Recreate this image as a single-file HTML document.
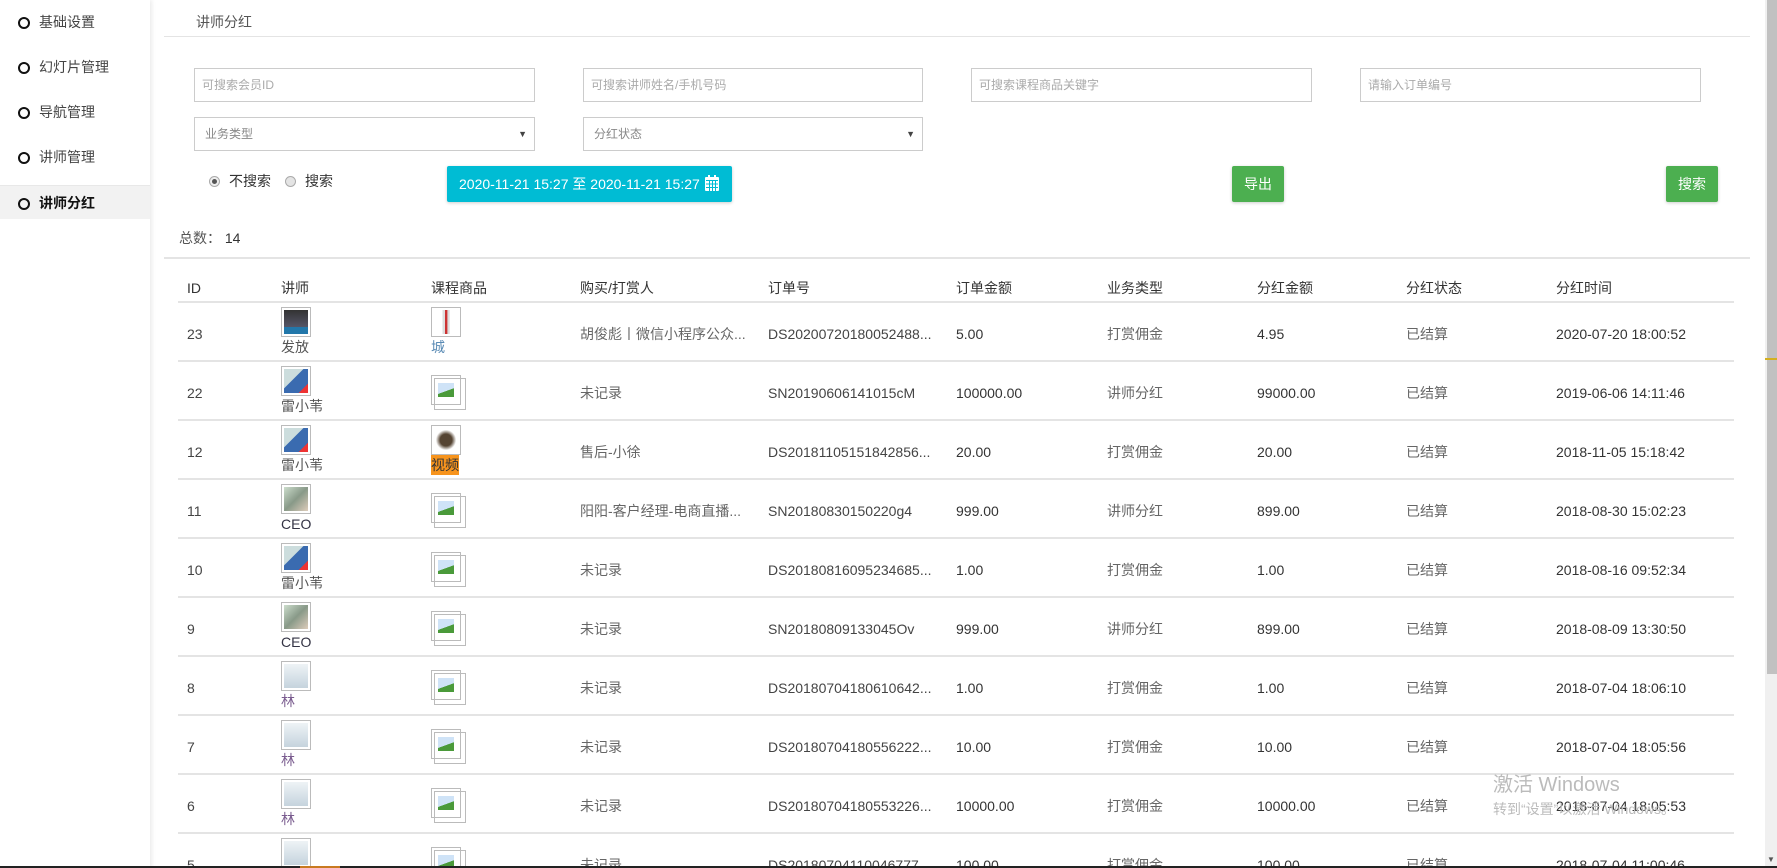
<!DOCTYPE html>
<html><head><meta charset="utf-8"><style>
*{margin:0;padding:0;box-sizing:border-box}
html{width:1777px;height:868px;overflow:hidden}
body{width:1777px;height:868px;overflow:hidden;background:#fff;font-family:"Liberation Sans","Noto Sans CJK SC",sans-serif;font-size:14px;color:#555;position:relative}
.abs{position:absolute}
.side{left:0;top:0;width:150px;height:868px;background:#fff;box-shadow:2px 0 4px rgba(0,0,0,.08)}
.nav{position:absolute;left:0;width:150px;height:34px;line-height:34px;padding-left:39px;color:#444;font-size:14px}
.nav:before{content:"";position:absolute;left:18px;top:12px;width:8px;height:8px;border:2px solid #111;border-radius:50%}
.nav.act{background:#f2f2f2;font-weight:bold;color:#111;border-top:1px solid #e8e8e8}
.inp{position:absolute;height:34px;border:1px solid #ccc;color:#aaa;font-size:12px;line-height:32px;padding-left:7px}
.sel{padding-left:10px;color:#888}
.sel:after{content:"▼";position:absolute;right:7px;top:0;font-size:9px;color:#444}
.btn{position:absolute;color:#fff;border-radius:2px;box-shadow:0 1px 3px rgba(0,0,0,.2);text-align:center;font-size:14px}
.line{position:absolute;height:2px;background:#e4e4e4}
.c{position:absolute;white-space:nowrap;line-height:20px;height:20px}
.av{position:absolute;width:30px;height:30px;border:1px solid #bbb;padding:2px}
.av i{display:block;width:100%;height:100%}
.pb{position:absolute;width:30px;height:30px;border:1px solid #bbb}
.pb:after{content:"";position:absolute;left:2px;top:2px;width:30px;height:30px;border:1px solid #bbb}
.pb i{position:absolute;left:6px;top:7px;width:16px;height:14px;background:linear-gradient(160deg,#cfe3f7 0 55%,#4a9a3a 56%)}
</style></head><body>
<div class="abs side">
<div class="nav" style="top:5px">基础设置</div>
<div class="nav" style="top:50px">幻灯片管理</div>
<div class="nav" style="top:95px">导航管理</div>
<div class="nav" style="top:140px">讲师管理</div>
<div class="nav act" style="top:185px">讲师分红</div>
</div>
<div class="c" style="left:196px;top:12px;color:#555">讲师分红</div>
<div class="line" style="left:164px;top:36px;width:1586px;height:1px"></div>
<div class="inp" style="left:194px;top:68px;width:341px">可搜索会员ID</div>
<div class="inp" style="left:583px;top:68px;width:340px">可搜索讲师姓名/手机号码</div>
<div class="inp" style="left:971px;top:68px;width:341px">可搜索课程商品关键字</div>
<div class="inp" style="left:1360px;top:68px;width:341px">请输入订单编号</div>
<div class="inp sel" style="left:194px;top:117px;width:341px">业务类型</div>
<div class="inp sel" style="left:583px;top:117px;width:340px">分红状态</div>
<div class="abs" style="left:209px;top:176px;width:11px;height:11px;border-radius:50%;border:1px solid #aaa;background:#eee"><div style="margin:2px;width:5px;height:5px;border-radius:50%;background:#555"></div></div>
<div class="c" style="left:229px;top:171px;color:#333">不搜索</div>
<div class="abs" style="left:285px;top:176px;width:11px;height:11px;border-radius:50%;border:1px solid #aaa;background:#e4e4e4"></div>
<div class="c" style="left:305px;top:171px;color:#333">搜索</div>
<div class="btn" style="left:447px;top:166px;width:285px;height:36px;background:#00bcd4;line-height:36px;text-align:left;padding-left:12px">2020-11-21 15:27 至 2020-11-21 15:27 <svg width="16" height="18" viewBox="0 0 16 18" style="vertical-align:-3px"><rect x="1" y="3" width="14" height="14" rx="1" fill="#fff"/><rect x="4" y="1" width="2" height="4" fill="#fff"/><rect x="10" y="1" width="2" height="4" fill="#fff"/><g fill="#00bcd4"><rect x="2" y="6" width="12" height="1"/><rect x="2" y="9.5" width="12" height="1"/><rect x="2" y="13" width="12" height="1"/><rect x="5" y="7" width="1" height="10"/><rect x="8" y="7" width="1" height="10"/><rect x="11" y="7" width="1" height="10"/></g></svg></div>
<div class="btn" style="left:1232px;top:166px;width:52px;height:36px;background:#4caf50;line-height:36px">导出</div>
<div class="btn" style="left:1666px;top:166px;width:52px;height:36px;background:#4caf50;line-height:36px">搜索</div>
<div class="c" style="left:179px;top:228px;color:#555">总数： <span style="color:#333">14</span></div>
<div class="line" style="left:164px;top:257px;width:1586px"></div>
<div class="c" style="left:187px;top:278px;color:#333">ID</div>
<div class="c" style="left:281px;top:278px;color:#333">讲师</div>
<div class="c" style="left:431px;top:278px;color:#333">课程商品</div>
<div class="c" style="left:580px;top:278px;color:#333">购买/打赏人</div>
<div class="c" style="left:768px;top:278px;color:#333">订单号</div>
<div class="c" style="left:956px;top:278px;color:#333">订单金额</div>
<div class="c" style="left:1107px;top:278px;color:#333">业务类型</div>
<div class="c" style="left:1257px;top:278px;color:#333">分红金额</div>
<div class="c" style="left:1406px;top:278px;color:#333">分红状态</div>
<div class="c" style="left:1556px;top:278px;color:#333">分红时间</div>
<div class="line" style="left:178px;top:301px;width:1556px"></div>
<div id="rows"></div>
<script>
var R=[
["23","发放","#555","linear-gradient(#333,#556 70%,#27a 72%)","b","胡俊彪丨微信小程序公众...","DS20200720180052488...","5.00","打赏佣金","4.95","2020-07-20 18:00:52"],
["22","雷小苇","#555","linear-gradient(135deg,#cdd 0 40%,#3a6bb0 41% 80%,#e33 81%)","x","未记录","SN20190606141015cM","100000.00","讲师分红","99000.00","2019-06-06 14:11:46"],
["12","雷小苇","#555","linear-gradient(135deg,#cdd 0 40%,#3a6bb0 41% 80%,#e33 81%)","v","售后-小徐","DS20181105151842856...","20.00","打赏佣金","20.00","2018-11-05 15:18:42"],
["11","CEO","#334","linear-gradient(135deg,#cdc,#898 50%,#dcb)","x","阳阳-客户经理-电商直播...","SN20180830150220g4","999.00","讲师分红","899.00","2018-08-30 15:02:23"],
["10","雷小苇","#555","linear-gradient(135deg,#cdd 0 40%,#3a6bb0 41% 80%,#e33 81%)","x","未记录","DS20180816095234685...","1.00","打赏佣金","1.00","2018-08-16 09:52:34"],
["9","CEO","#334","linear-gradient(135deg,#cdc,#898 50%,#dcb)","x","未记录","SN20180809133045Ov","999.00","讲师分红","899.00","2018-08-09 13:30:50"],
["8","林","#7a5c8f","linear-gradient(#eef3f6,#c5d3dd)","x","未记录","DS20180704180610642...","1.00","打赏佣金","1.00","2018-07-04 18:06:10"],
["7","林","#7a5c8f","linear-gradient(#eef3f6,#c5d3dd)","x","未记录","DS20180704180556222...","10.00","打赏佣金","10.00","2018-07-04 18:05:56"],
["6","林","#7a5c8f","linear-gradient(#eef3f6,#c5d3dd)","x","未记录","DS20180704180553226...","10000.00","打赏佣金","10000.00","2018-07-04 18:05:53"],
["5","林","#7a5c8f","linear-gradient(#eef3f6,#c5d3dd)","x","未记录","DS20180704110046777","100.00","打赏佣金","100.00","2018-07-04 11:00:46"]];
var h="";
R.forEach(function(r,i){var t=302+i*59,m=t+22;
h+='<div class="c" style="left:187px;top:'+m+'px;color:#444">'+r[0]+'</div>';
h+='<div class="av" style="left:281px;top:'+(t+5)+'px"><i style="background:'+r[3]+'"></i></div>';
h+='<div class="c" style="left:281px;top:'+(t+35)+'px;color:'+r[2]+'">'+r[1]+'</div>';
if(r[4]=="x")h+='<div class="pb" style="left:431px;top:'+(t+14)+'px"><i></i></div>';
else if(r[4]=="b")h+='<div class="av" style="left:431px;top:'+(t+5)+'px;background:#fff"><i style="background:linear-gradient(90deg,#fff 35%,#ddd 36% 45%,#c33 46% 55%,#ddd 56% 65%,#fff 66%)"></i></div><div class="c" style="left:431px;top:'+(t+35)+'px;color:#5a8bb5">城</div>';
else h+='<div class="av" style="left:431px;top:'+(t+5)+'px"><i style="background:radial-gradient(circle,#543 0 35%,#fff 60%)"></i></div><div class="c" style="left:431px;top:'+(t+35)+'px;color:#333;background:#f7941d">视频</div>';
h+='<div class="c" style="left:580px;top:'+m+'px;color:#666">'+r[5]+'</div>';
h+='<div class="c" style="left:768px;top:'+m+'px;color:#444">'+r[6]+'</div>';
h+='<div class="c" style="left:956px;top:'+m+'px;color:#333">'+r[7]+'</div>';
h+='<div class="c" style="left:1107px;top:'+m+'px;color:#666">'+r[8]+'</div>';
h+='<div class="c" style="left:1257px;top:'+m+'px;color:#333">'+r[9]+'</div>';
h+='<div class="c" style="left:1406px;top:'+m+'px;color:#666">已结算</div>';
h+='<div class="c" style="left:1556px;top:'+m+'px;color:#333">'+r[10]+'</div>';
h+='<div class="line" style="left:178px;top:'+(t+58)+'px;width:1556px"></div>';});
document.getElementById("rows").innerHTML=h;
</script>
<div class="c" style="left:1493px;top:772px;font-size:20px;height:26px;line-height:26px;color:#bbb">激活 Windows</div>
<div class="c" style="left:1493px;top:799px;font-size:14px;color:#bbb">转到“设置”以激活 Windows。</div>
<div class="abs" style="left:1765px;top:0;width:12px;height:868px;background:#f0f0f0"></div>
<div class="abs" style="left:1767px;top:0;width:10px;height:674px;background:#c1c1c1"></div>
<div class="abs" style="left:1765px;top:358px;width:12px;height:2px;background:#d4b020"></div>
<div class="c" style="left:1767px;top:850px;font-size:8px;color:#555">▼</div>
<div class="abs" style="left:0;top:866px;width:1777px;height:2px;background:#222"></div>
<div class="abs" style="left:300px;top:866px;width:40px;height:2px;background:#c87a20"></div>
</body></html>
